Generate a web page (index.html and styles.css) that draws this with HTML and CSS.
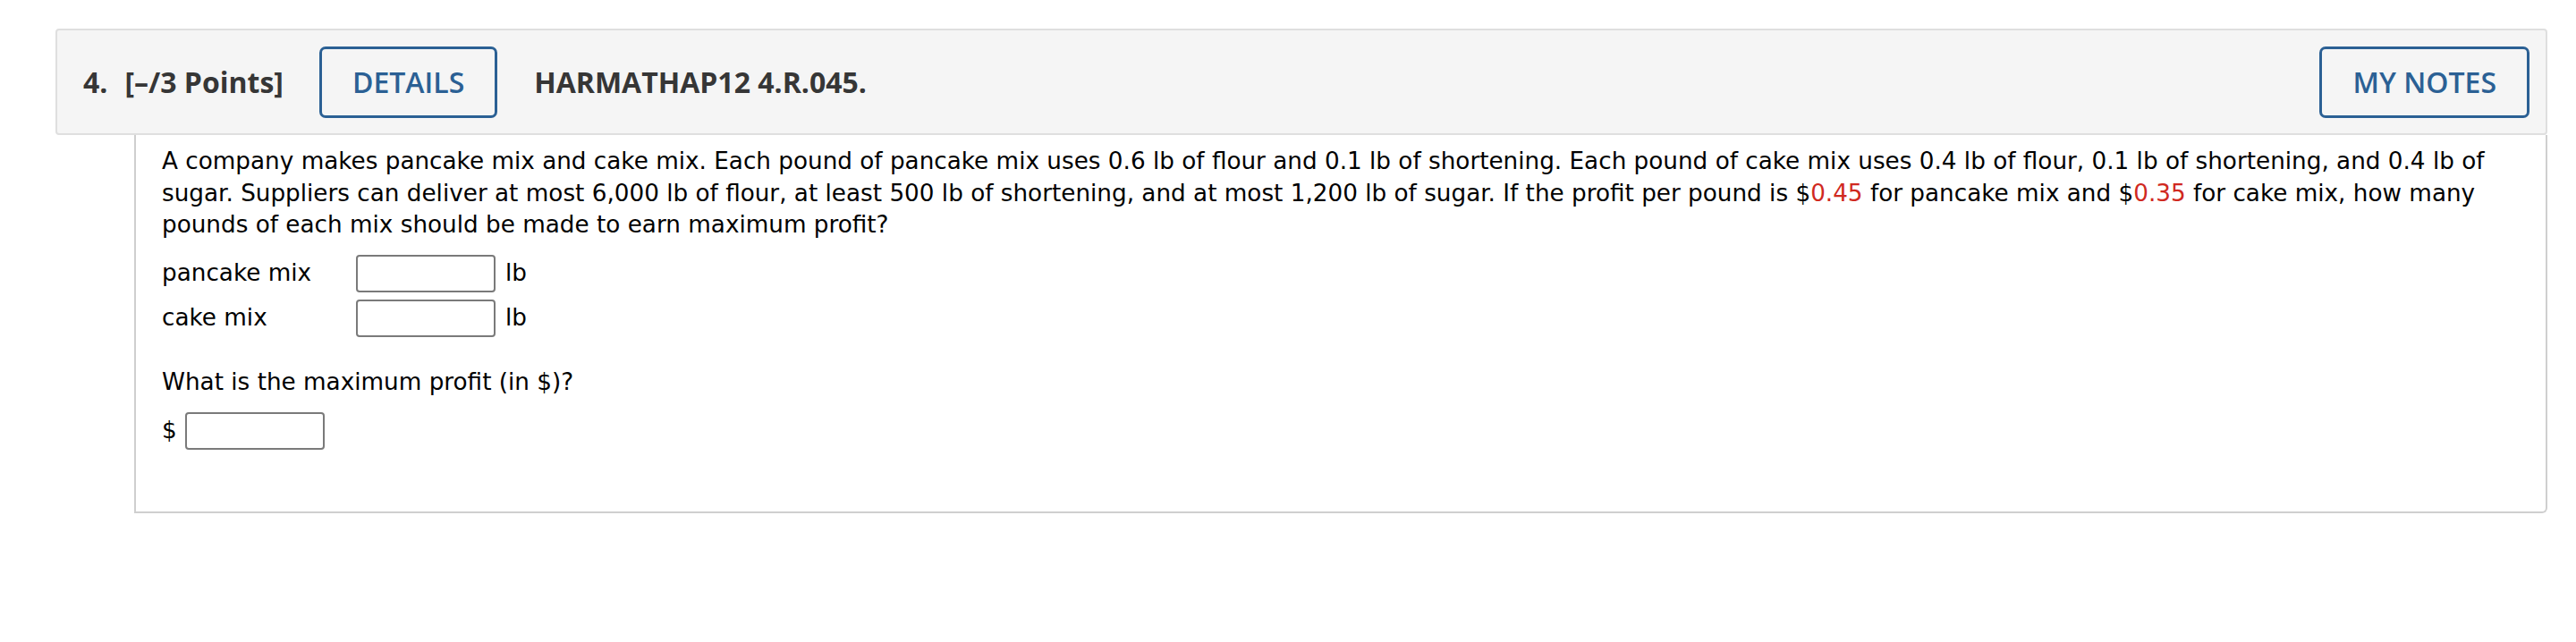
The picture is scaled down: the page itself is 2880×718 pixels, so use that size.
FILE: index.html
```html
<!DOCTYPE html>
<html lang="en">
<head>
<meta charset="utf-8">
<title>Question 4</title>
<link rel="stylesheet" href="styles.css">
</head>
<body>
<div class="question">
  <div class="qhead">
    <span class="qnum">4.</span>
    <span class="qpts">[&ndash;/3 Points]</span>
    <button class="btn" type="button">DETAILS</button>
    <span class="qcode">HARMATHAP12 4.R.045.</span>
    <span class="spacer"></span>
    <button class="btn" type="button">MY NOTES</button>
  </div>
  <div class="qbody">
    <p class="prompt">A company makes pancake mix and cake mix. Each pound of pancake mix uses 0.6 lb of flour and 0.1 lb of shortening. Each pound of cake mix uses 0.4 lb of flour, 0.1 lb of shortening, and 0.4 lb of sugar. Suppliers can deliver at most 6,000 lb of flour, at least 500 lb of shortening, and at most 1,200 lb of sugar. If the profit per pound is $<span class="red">0.45</span> for pancake mix and $<span class="red">0.35</span> for cake mix, how many pounds of each mix should be made to earn maximum profit?</p>
    <div class="answers">
      <span class="lbl">pancake mix</span>
      <input class="ans" type="text">
      <span class="unit">lb</span>
      <span class="lbl">cake mix</span>
      <input class="ans" type="text">
      <span class="unit">lb</span>
    </div>
    <p class="prompt q2">What is the maximum profit (in $)?</p>
    <div class="dollar">
      <span class="cur">$</span>
      <input class="ans" type="text">
    </div>
  </div>
</div>
</body>
</html>
```
FILE: styles.css
```css
html, body {
  margin: 0;
  padding: 0;
  background: #ffffff;
}

.question {
  margin: 32px 0 0 62px;
  width: 2786px;
}

.qhead {
  display: flex;
  align-items: center;
  box-sizing: border-box;
  height: 119px;
  padding: 0 18px 0 29px;
  background: #f5f5f5;
  border: 2px solid #dfdfdf;
  border-radius: 4px;
  font-family: "Open Sans", "Noto Sans", sans-serif;
  font-size: 32px;
  font-weight: 700;
  color: #363636;
}

.qnum {
  margin-right: 19px;
}

.qpts {
  margin-right: 40px;
}

.qcode {
  margin-left: 41px;
}

.spacer {
  flex: 1;
}

.btn {
  box-sizing: border-box;
  height: 80px;
  padding: 0 34px;
  background: transparent;
  border: 3px solid #2b6094;
  border-radius: 7px;
  font-family: "Open Sans", "Noto Sans", sans-serif;
  font-size: 32px;
  font-weight: 600;
  color: #2b6094;
  line-height: 1;
}

.qbody {
  margin-left: 88px;
  box-sizing: border-box;
  height: 423px;
  padding: 12px 20px 0 29px;
  border: 2px solid #cfcfcf;
  border-top: none;
  border-bottom-right-radius: 6px;
  font-family: "DejaVu Sans", Verdana, sans-serif;
  font-size: 26.25px;
  line-height: 35.5px;
  color: #000000;
}

.prompt {
  margin: 0;
}

.red {
  color: #d0291f;
}

.answers {
  display: grid;
  grid-template-columns: 217px 156px auto;
  grid-auto-rows: 42px;
  row-gap: 8px;
  align-items: center;
  justify-content: start;
  margin-top: 15px;
}

.ans {
  box-sizing: border-box;
  width: 156px;
  height: 42px;
  margin: 0;
  padding: 0 6px;
  border: 2px solid #7a7a7a;
  border-radius: 4px;
  background: #ffffff;
  font-family: "DejaVu Sans", Verdana, sans-serif;
  font-size: 26px;
}

.unit {
  margin-left: 11px;
}

.q2 {
  margin-top: 33px;
}

.dollar {
  display: flex;
  align-items: center;
  margin-top: 16px;
  height: 42px;
}

.cur {
  margin-right: 9px;
}
```
